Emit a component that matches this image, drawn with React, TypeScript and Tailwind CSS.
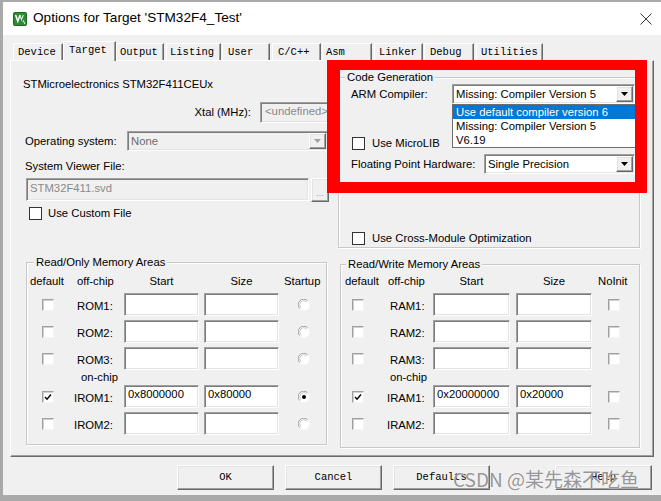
import React from "react";

const sans = "font-['Liberation_Sans',Arial,sans-serif]";
const mono = "font-['Liberation_Mono','Courier_New',monospace]";

const sunken =
  "border border-t-[#a0a0a0] border-l-[#a0a0a0] border-r-white border-b-white shadow-[inset_1px_1px_0_#7c7c7c,inset_-1px_-1px_0_#e3e3e3]";
const raised =
  "border border-t-white border-l-white border-r-[#696969] border-b-[#696969] shadow-[inset_-1px_-1px_0_#a0a0a0,inset_1px_1px_0_#e3e3e3]";
const etched = "border border-[#c8c8c8] shadow-[inset_1px_1px_0_#fff,1px_1px_0_#fff]";

function Arrow({ disabled }: { disabled?: boolean }) {
  return (
    <svg width="7" height="4" viewBox="0 0 7 4">
      <path d="M0 0h7L3.5 4z" fill={disabled ? "#a0a0a0" : "#000"} />
    </svg>
  );
}

function Select({
  value,
  className,
  disabled,
  children,
}: {
  value: string;
  className: string;
  disabled?: boolean;
  children?: React.ReactNode;
}) {
  return (
    <div
      className={`relative flex items-center ${sunken} ${
        disabled ? "bg-[#f0f0f0] text-[#6d6d6d]" : "bg-white text-black"
      } ${className}`}
    >
      <div className="flex-1 pl-[3px] leading-[16px] whitespace-nowrap">{value}</div>
      <div className={`mr-[1px] flex h-[16px] w-[17px] items-center justify-center bg-[#f0f0f0] ${raised}`}>
        <Arrow disabled={disabled} />
      </div>
      {children}
    </div>
  );
}

function FlatCheck() {
  return <div className="h-[13px] w-[13px] shrink-0 border border-[#333] bg-white" />;
}

function Check3d({ checked }: { checked?: boolean }) {
  return (
    <div className="flex h-[12px] w-[12px] items-center justify-center border border-t-[#a0a0a0] border-l-[#a0a0a0] border-r-[#f4f4f4] border-b-[#f4f4f4] bg-white shadow-[inset_1px_1px_0_#d0d0d0]">
      {checked && (
        <svg width="8" height="8" viewBox="0 0 8 8">
          <path d="M1 4l2 2.2L7 1.5" stroke="#000" strokeWidth="1.4" fill="none" />
        </svg>
      )}
    </div>
  );
}

function Radio({ on }: { on?: boolean }) {
  return (
    <svg width="12" height="12" viewBox="0 0 12 12">
      <circle cx="6" cy="6" r="5.5" fill="#fff" />
      <path d="M1.8 9.6A5 5 0 0 1 9.6 1.8" stroke="#a0a0a0" fill="none" />
      <path d="M2.9 8.6A4 4 0 0 1 8.6 2.9" stroke="#c8c8c8" fill="none" />
      {on && <circle cx="6" cy="6" r="2" fill="#000" />}
    </svg>
  );
}

function Field({ value, className }: { value?: string; className: string }) {
  return (
    <div className={`h-[23px] shrink-0 bg-white pl-[3px] leading-[16px] ${sunken} ${className}`}>{value}</div>
  );
}

function Tab({ label, className, active }: { label: string; className: string; active?: boolean }) {
  return (
    <div
      className={`${className} ${
        active ? "relative z-10 -mb-px h-[20px]" : "h-[17px]"
      } shrink-0 border-l border-t border-r border-l-white border-t-white border-r-[#696969] bg-[#f0f0f0] pt-[1px] text-[10.5px] leading-[14px] text-black shadow-[inset_-1px_0_0_#a0a0a0] ${mono}`}
    >
      {label}
    </div>
  );
}

function Btn({ label, className }: { label: string; className: string }) {
  return (
    <div
      className={`flex h-[25px] w-[97px] items-center justify-center bg-[#f0f0f0] text-[10.5px] ${raised} ${mono} ${className}`}
    >
      {label}
    </div>
  );
}

const romRows = [
  { label: "ROM1:", pl: "pl-[7px]" },
  { label: "ROM2:", pl: "pl-[7px]" },
  { label: "ROM3:", pl: "pl-[7px]" },
];
const ramRows = [
  { label: "RAM1:", pl: "pl-[5px]" },
  { label: "RAM2:", pl: "pl-[5px]" },
  { label: "RAM3:", pl: "pl-[5px]" },
];

export default function App() {
  return (
    <div className={`relative h-[501px] w-[661px] overflow-hidden bg-[#a9a9a9] pl-[3px] pt-[2px] text-[11.3px] text-black ${sans}`}>
      <div className="flex h-[493px] w-[658px] flex-col bg-[#f0f0f0]">
        {/* title bar */}
        <div className="flex h-[33px] shrink-0 items-center bg-white pl-[10px]">
          <svg width="14" height="14" viewBox="0 0 14 14">
            <rect x="0.5" y="0.5" width="13" height="13" rx="1" fill="#2f8a34" stroke="#1d6a22" />
            <path d="M2.6 3l2.2 6.2L7 3" stroke="#fff" strokeWidth="1.5" fill="none" />
            <path d="M6.8 3l1.7 4.6L10.3 3" stroke="#d9f0d9" strokeWidth="1.1" fill="none" />
            <path d="M11 8.6c-1.3 0-1.3 1.5 0 1.5s1.3 1.6 0 1.6" stroke="#fff" strokeWidth="0.9" fill="none" />
          </svg>
          <div className="ml-[6px] text-[13.6px] text-black">Options for Target 'STM32F4_Test'</div>
          <svg className="ml-auto mr-[9px]" width="12" height="12" viewBox="0 0 12 12">
            <path d="M0.5 0.5l11 11M11.5 0.5l-11 11" stroke="#333" strokeWidth="1" />
          </svg>
        </div>

        {/* tabs */}
        <div className="flex h-[25px] shrink-0 items-end pl-[10px] pt-[6px]">
          <Tab label="Device" className="w-[50px] pl-[4px]" />
          <Tab label="Target" className="w-[53px] pl-[5px]" active />
          <Tab label="Output" className="w-[48px] pl-[3px]" />
          <Tab label="Listing" className="ml-[2px] w-[55px] pl-[3px]" />
          <Tab label="User" className="ml-[1px] w-[48px] pl-[5px]" />
          <Tab label="C/C++" className="ml-[2px] w-[49px] pl-[5px]" />
          <Tab label="Asm" className="ml-[1px] w-[50px] pl-[3px]" />
          <Tab label="Linker" className="ml-[2px] w-[49px] pl-[4px]" />
          <Tab label="Debug" className="ml-[1px] w-[50px] pl-[5px]" />
          <Tab label="Utilities" className="ml-[2px] w-[67px] pl-[4px]" />
        </div>

        {/* panel */}
        <div className="ml-[7px] flex h-[397px] w-[644px] shrink-0 flex-col border border-b-[#696969] border-l-white border-r-[#696969] border-t-white shadow-[inset_-1px_-1px_0_#a0a0a0]">
          <div className="flex items-start">
            {/* left block */}
            <div className="ml-[10px] flex w-[310px] flex-col">
              <div className="mt-[15px] h-[16px] pl-[2px] leading-[16px]">STMicroelectronics STM32F411CEUx</div>
              <div className="mt-[10px] flex h-[21px] items-center justify-end">
                <div>Xtal (MHz):</div>
                <div className={`ml-[9px] h-[21px] w-[71px] bg-[#f0f0f0] pl-[4px] leading-[17px] text-[#8a8a8a] ${sunken}`}>
                  &lt;undefined&gt;
                </div>
              </div>
              <div className="mt-[8px] flex h-[20px] items-center">
                <div className="w-[106px] pl-[4px]">Operating system:</div>
                <Select value="None" className="h-[20px] w-[201px]" disabled />
              </div>
              <div className="mt-[7px] h-[16px] pl-[4px] leading-[16px]">System Viewer File:</div>
              <div className="mt-[4px] flex h-[23px]">
                <div className={`ml-[5px] h-[23px] w-[283px] bg-[#f0f0f0] pl-[3px] leading-[19px] text-[#8a8a8a] ${sunken}`}>
                  STM32F411.svd
                </div>
                <div className={`ml-[2px] flex h-[24px] w-[18px] items-end justify-center bg-[#f0f0f0] pb-[3px] text-[9px] leading-[9px] text-[#a0a0a0] ${raised}`}>
                  ...
                </div>
              </div>
              <div className="mt-[6px] flex h-[13px] items-center">
                <div className="ml-[8px]">
                  <FlatCheck />
                </div>
                <div className="ml-[6px]">Use Custom File</div>
              </div>
            </div>

            {/* code generation */}
            <fieldset className={`ml-[7px] mt-[9px] h-[178px] w-[302px] p-0 ${etched}`}>
              <legend className="ml-[6px] bg-[#f0f0f0] px-[2px] leading-[14px]">Code Generation</legend>
              <div className="flex h-[20px] items-center">
                <div className="w-[113px] pl-[12px]">ARM Compiler:</div>
                <Select value="Missing: Compiler Version 5" className="h-[20px] w-[183px]">
                  <div className="absolute left-[-1px] top-[19px] z-20 w-[184px] border border-[#6e6e6e] bg-white leading-[14px]">
                    <div className="bg-[#0078d7] pl-[3px] text-white">Use default compiler version 6</div>
                    <div className="pl-[3px]">Missing: Compiler Version 5</div>
                    <div className="pl-[3px]">V6.19</div>
                  </div>
                </Select>
              </div>
              <div className="mt-[33px] flex h-[13px] items-center">
                <div className="ml-[13px]">
                  <FlatCheck />
                </div>
                <div className="ml-[7px]">Use MicroLIB</div>
              </div>
              <div className="mt-[4px] flex h-[20px] items-center">
                <div className="w-[145px] pl-[12px]">Floating Point Hardware:</div>
                <Select value="Single Precision" className="h-[20px] w-[151px]" />
              </div>
              <div className="mt-[58px] flex h-[13px] items-center">
                <div className="ml-[13px]">
                  <FlatCheck />
                </div>
                <div className="ml-[7px]">Use Cross-Module Optimization</div>
              </div>
            </fieldset>
          </div>

          {/* memory areas */}
          <div className="mt-[7px] flex items-start">
            <fieldset className={`ml-[15px] h-[190px] w-[301px] p-0 ${etched}`}>
              <legend className="ml-[7px] bg-[#f0f0f0] px-[2px] leading-[14px]">Read/Only Memory Areas</legend>
              <div className="mt-[4px] flex h-[16px] items-center">
                <div className="w-[43px] pl-[3px]">default</div>
                <div className="w-[54px] pl-[7px]">off-chip</div>
                <div className="w-[75px] text-center">Start</div>
                <div className="ml-[5px] w-[75px] text-center">Size</div>
                <div className="ml-[5px]">Startup</div>
              </div>
              {romRows.map((r) => (
                <div key={r.label} className="mt-[4px] flex h-[23px] items-center">
                  <div className="w-[43px] pl-[15px]">
                    <Check3d />
                  </div>
                  <div className={`w-[54px] pt-[3px] ${r.pl}`}>{r.label}</div>
                  <Field className="w-[75px]" />
                  <Field className="ml-[5px] w-[75px]" />
                  <div className="ml-[19px] flex">
                    <Radio />
                  </div>
                </div>
              ))}
              <div className="flex h-[15px] items-center pl-[54px]">on-chip</div>
              <div className="flex h-[23px] items-center">
                <div className="w-[43px] pl-[15px]">
                  <Check3d checked />
                </div>
                <div className="w-[54px] pl-[4px] pt-[4px]">IROM1:</div>
                <Field className="w-[75px]" value="0x8000000" />
                <Field className="ml-[5px] w-[75px]" value="0x80000" />
                <div className="ml-[19px] flex">
                  <Radio on />
                </div>
              </div>
              <div className="mt-[4px] flex h-[23px] items-center">
                <div className="w-[43px] pl-[15px]">
                  <Check3d />
                </div>
                <div className="w-[54px] pl-[4px] pt-[3px]">IROM2:</div>
                <Field className="w-[75px]" />
                <Field className="ml-[5px] w-[75px]" />
                <div className="ml-[19px] flex">
                  <Radio />
                </div>
              </div>
            </fieldset>

            <fieldset className={`ml-[13px] mt-[2px] h-[191px] w-[300px] p-0 ${etched}`}>
              <legend className="ml-[5px] bg-[#f0f0f0] px-[2px] leading-[14px]">Read/Write Memory Areas</legend>
              <div className="mt-[2px] flex h-[16px] items-center">
                <div className="w-[44px] pl-[4px]">default</div>
                <div className="w-[48px] pl-[3px]">off-chip</div>
                <div className="w-[77px] text-center">Start</div>
                <div className="ml-[6px] w-[76px] text-center">Size</div>
                <div className="ml-[6px]">NoInit</div>
              </div>
              {ramRows.map((r) => (
                <div key={r.label} className="mt-[4px] flex h-[23px] items-center">
                  <div className="w-[44px] pl-[11px]">
                    <Check3d />
                  </div>
                  <div className={`w-[48px] pt-[3px] ${r.pl}`}>{r.label}</div>
                  <Field className="w-[77px]" />
                  <Field className="ml-[6px] w-[76px]" />
                  <div className="ml-[16px]">
                    <Check3d />
                  </div>
                </div>
              ))}
              <div className="flex h-[15px] items-center pl-[49px]">on-chip</div>
              <div className="flex h-[23px] items-center">
                <div className="w-[44px] pl-[11px]">
                  <Check3d checked />
                </div>
                <div className="w-[48px] pl-[2px] pt-[4px]">IRAM1:</div>
                <Field className="w-[77px]" value="0x20000000" />
                <Field className="ml-[6px] w-[76px]" value="0x20000" />
                <div className="ml-[16px]">
                  <Check3d />
                </div>
              </div>
              <div className="mt-[4px] flex h-[23px] items-center">
                <div className="w-[44px] pl-[11px]">
                  <Check3d />
                </div>
                <div className="w-[48px] pl-[2px] pt-[3px]">IRAM2:</div>
                <Field className="w-[77px]" />
                <Field className="ml-[6px] w-[76px]" />
                <div className="ml-[16px]">
                  <Check3d />
                </div>
              </div>
            </fieldset>
          </div>
        </div>

        {/* buttons */}
        <div className="mt-[8px] flex">
          <Btn label="OK" className="ml-[174px]" />
          <Btn label="Cancel" className="ml-[11px]" />
          <Btn label="Defaults" className="ml-[11px]" />
          <Btn label="Help" className="ml-[65px]" />
        </div>
      </div>

      {/* red highlight frame */}
      <div className="pointer-events-none absolute left-[327px] top-[60px] z-30 h-[133px] w-[320px] border-b-[11px] border-l-[13px] border-r-[12px] border-t-[10px] border-[#ff0000]" />

      {/* watermark */}
      <div className="pointer-events-none absolute left-[453px] top-[466px] z-40 whitespace-nowrap font-['Noto_Sans_CJK_SC',sans-serif] text-[19px] leading-[26px] text-[#7a7a7a]/80 [text-shadow:0_0_1px_#fff]">
        CSDN @某先森不吃鱼
      </div>
    </div>
  );
}
